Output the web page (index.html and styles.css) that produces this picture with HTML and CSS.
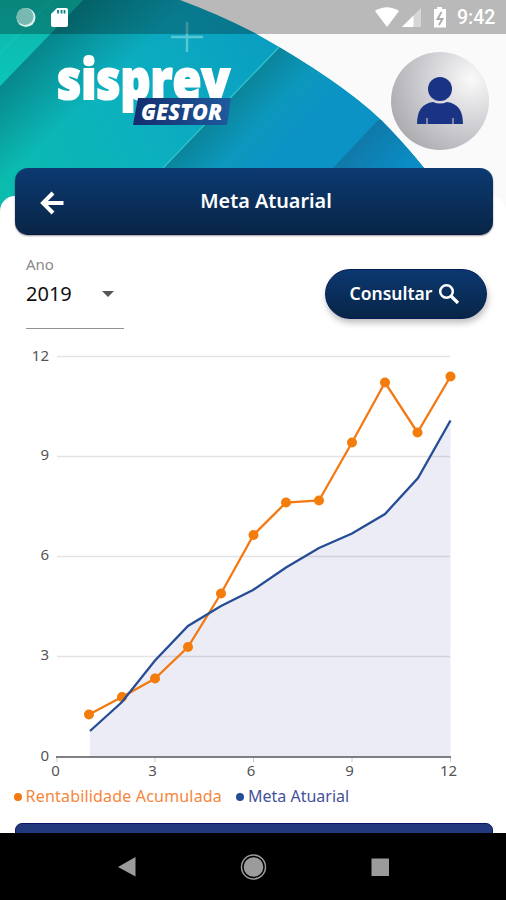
FILE: index.html
```html
<!DOCTYPE html>
<html lang="pt-br">
<head>
	<title>Sisprev Gestor - Meta Atuarial</title>
	<meta charset="utf-8">
	<meta name="viewport" content="width=device-width, initial-scale=1">
	<link rel="stylesheet" href="styles.css">
</head>

<body>
	<header>
		<!-- Background art -->
		<svg class="art" viewBox="0 0 506 240" width="506" height="240">
			<defs>
				<linearGradient id="sea" gradientUnits="userSpaceOnUse" x1="0" y1="190" x2="300" y2="40">
					<stop offset="0" stop-color="#0bbcae"/>
					<stop offset="0.45" stop-color="#0cb0bf"/>
					<stop offset="1" stop-color="#0a9bc2"/>
				</linearGradient>
				<linearGradient id="shadow1" gradientUnits="userSpaceOnUse" x1="40" y1="42" x2="92" y2="97">
					<stop offset="0" stop-color="#067f86" stop-opacity="0.9"/>
					<stop offset="1" stop-color="#067f86" stop-opacity="0"/>
				</linearGradient>
				<linearGradient id="shadow2" gradientUnits="userSpaceOnUse" x1="222" y1="108" x2="275" y2="158">
					<stop offset="0" stop-color="#0b859c"/>
					<stop offset="0.55" stop-color="#0c98bd"/>
					<stop offset="1" stop-color="#0c93c5"/>
				</linearGradient>
				<linearGradient id="shadow3" gradientUnits="userSpaceOnUse" x1="355" y1="143" x2="395" y2="180">
					<stop offset="0" stop-color="#1079a8"/>
					<stop offset="1" stop-color="#0b8cc4"/>
				</linearGradient>
				<linearGradient id="band" x1="0" y1="0" x2="0" y2="1">
					<stop offset="0" stop-color="#0cb5a8"/>
					<stop offset="1" stop-color="#0cc5bb"/>
				</linearGradient>
				<clipPath id="disc">
					<path d="M0 0H180Q218 14 253 32Q340 81 381 120Q403 142 424 168L460 240H0Z"/>
				</clipPath>
			</defs>
			<g clip-path="url(#disc)">
				<rect width="506" height="240" fill="url(#sea)"/>
				<path d="M83 0H230L0 220V86Z" fill="url(#shadow1)"/>
				<path d="M0 0H83L0 86Z" fill="url(#band)"/>
				<path d="M0 54L52 0" stroke="#2fd0c6" stroke-opacity="0.5"/>
				<path d="M279 46L163 168V240H506V46Z" fill="url(#shadow2)"/>
				<path d="M280 46L163 168" stroke="#2cc2cd" stroke-width="1.500"/>
				<path d="M378 120L333 168V240H506V120Z" fill="url(#shadow3)"/>
			</g>
			<path d="M187 22V52M171 37H203" stroke="#7fd8dd" stroke-opacity="0.65" stroke-width="2.500"/>
		</svg>

		<div class="statusbar">
			<svg viewBox="0 0 76 34" width="76" height="34">
				<circle cx="26" cy="17.500" r="9.500" fill="#d9f0ee"/>
				<circle cx="25" cy="16.500" r="8.500" fill="#78b9b1"/>
				<path d="M57 8H66Q68 8 68 10V25Q68 27 66 27H53Q51 27 51 25V14Z" fill="#fff"/>
				<path d="M58 10V13.500M61.500 10V13.500M64.500 10V13.500" stroke="#08808a" stroke-width="1.800"/>
			</svg>
			<div class="right">
				<svg viewBox="372 0 76 34" width="76" height="34">
					<path d="M375 11Q387 3.500 399 11L387 27Z" fill="#fff"/>
					<path d="M421 8V27H402Z" fill="#d6d6d6"/>
					<path d="M413.500 15.500V27H402Z" fill="#fff"/>
					<path d="M437 7H442V9H446V27.500H434V9H437Z" fill="#fff"/>
					<path d="M441.500 12L437.500 19H442.500L439 25" fill="none" stroke="#aaa" stroke-width="1.800"/>
				</svg>
				<span class="clock">9:42</span>
			</div>
		</div>

		<div class="brand">
			<svg class="logo" viewBox="50 50 190 80" width="190" height="80">
				<defs>
					<linearGradient id="tag" x1="0" y1="0" x2="1" y2="0">
						<stop offset="0" stop-color="#152c6d"/>
						<stop offset="1" stop-color="#1e5b9e"/>
					</linearGradient>
				</defs>
				<text x="57" y="98.500" class="word" textLength="173" lengthAdjust="spacingAndGlyphs">sisprev</text>
				<path d="M138 98H231L227 125H133Z" fill="url(#tag)"/>
				<text x="141" y="119.500" class="sub" textLength="81" lengthAdjust="spacingAndGlyphs">GESTOR</text>
			</svg>
			<div class="avatar">
				<svg viewBox="0 0 46 48" width="46" height="48">
					<circle cx="23" cy="12" r="12" fill="#1b3384"/>
					<path d="M0 47Q0 27 16 25Q23 28 30 25Q46 27 46 47Z" fill="#1b3384"/>
					<path d="M10 41V47M36 41V47" stroke="#c0c0c4" stroke-width="1.200"/>
				</svg>
			</div>
		</div>
	</header>

	<main>
		<div class="titlebar">
			<svg viewBox="0 0 24 24" width="24" height="24">
				<path d="M23.500 12H3M13 2L3 12L13 22" fill="none" stroke="#fff" stroke-width="4"/>
			</svg>
			<h1>Meta Atuarial</h1>
		</div>

		<div class="filter">
			<div class="year">
				<label>Ano</label>
				<div class="select"><span>2019</span><i class="caret"></i></div>
			</div>
			<button>
				<span>Consultar</span>
				<svg viewBox="0 0 22 22" width="22" height="22">
					<circle cx="8.500" cy="8.500" r="6.300" fill="none" stroke="#fff" stroke-width="2.500"/>
					<path d="M13 13L20 20" stroke="#fff" stroke-width="3.200"/>
				</svg>
			</button>
		</div>

		<!-- Chart -->
		<svg class="chart" viewBox="0 340 506 440" width="506" height="440">
			<path d="M90 757V731L122 702L155 660.500L188 626L221 606L253 590L286 567.500L319 548L352 533.500L385 514L418 478L450.500 420.500V757Z" fill="#ebecf5"/>
			<path d="M57 356.500H450M57 456.500H450M57 556.500H450M57 656.500H450" stroke="#000" stroke-opacity="0.11" stroke-width="1.400"/>
			<path d="M56 757H451" stroke="#55565c" stroke-width="1.600"/>
			<path d="M57 758V762M155 758V762M253.500 758V762M352 758V762M450.500 758V762" stroke="#ccc"/>
			<g class="line orange">
				<polyline points="89,714.500 122,697 155,678.500 188,647 221,593.500 253.500,535 286,502.500 319,500.500 352,442.500 385,382.500 417.500,432.500 450.500,376.500"/>
				<circle cx="89" cy="714.500" r="5"/>
				<circle cx="122" cy="697" r="5"/>
				<circle cx="155" cy="678.500" r="5"/>
				<circle cx="188" cy="647" r="5"/>
				<circle cx="221" cy="593.500" r="5"/>
				<circle cx="253.500" cy="535" r="5"/>
				<circle cx="286" cy="502.500" r="5"/>
				<circle cx="319" cy="500.500" r="5"/>
				<circle cx="352" cy="442.500" r="5"/>
				<circle cx="385" cy="382.500" r="5"/>
				<circle cx="417.500" cy="432.500" r="5"/>
				<circle cx="450.500" cy="376.500" r="5"/>
			</g>
			<g class="line blue">
				<polyline points="90,731 122,702 155,660.500 188,626 221,606 253,590 286,567.500 319,548 352,533.500 385,514 418,478 450.500,420.500"/>
			</g>
			<g class="axis y">
				<text x="49" y="361">12</text>
				<text x="49" y="460">9</text>
				<text x="49" y="560">6</text>
				<text x="49" y="660">3</text>
				<text x="49" y="761">0</text>
			</g>
			<g class="axis x">
				<text x="55.500" y="776">0</text>
				<text x="152.500" y="776">3</text>
				<text x="251" y="776">6</text>
				<text x="349.500" y="776">9</text>
				<text x="448.500" y="776">12</text>
			</g>
		</svg>

		<div class="legend">
			<span class="item rent"><i></i>Rentabilidade Acumulada</span>
			<span class="item meta"><i></i>Meta Atuarial</span>
		</div>

		<div class="nextcard"></div>
	</main>

	<footer>
		<svg viewBox="0 833 506 67" width="506" height="67" fill="#9b9b9b">
			<path d="M118 867L135.500 857V876.500Z"/>
			<circle cx="253.500" cy="867" r="9.800"/>
			<circle cx="253.500" cy="867" r="12" fill="none" stroke="#9b9b9b" stroke-width="1.500"/>
			<rect x="371.500" y="858.500" width="17.500" height="17.500"/>
		</svg>
	</footer>
</body>
</html>
```
FILE: styles.css
```css
* {
  box-sizing: border-box;
}

body {
  margin: 0;
  width: 506px;
  height: 900px;
  overflow: hidden;
  display: flex;
  flex-direction: column;
  background-color: #fafafa;
  font-family: "Noto Sans", "Open Sans", sans-serif;
}

svg {
  display: block;
}

/* Style the header */
header {
  position: relative;
  height: 168px;
  flex: none;
}

/* Art lies under the status bar, logo and title */
.art {
  position: absolute;
  left: 0;
  top: 0;
}

.statusbar {
  position: relative;
  display: flex;
  justify-content: space-between;
  height: 34px;
  background-color: rgba(0,0,0,0.26);
}
.right {
  display: flex;
  align-items: center;
  padding-right: 11px;
}
.clock {
  width: 47px;
  padding: 2px 0 0 9px;
  color: white;
  font: 500 19.5px/36px Roboto, sans-serif;
}

.brand {
  position: relative;
  display: flex;
  justify-content: space-between;
  padding: 16px 17px 0 50px;
}
.logo {
  overflow: visible;
}
.word {
  font: 800 54px "Open Sans", sans-serif;
  fill: white;
  stroke: white;
  stroke-width: 2px;
}
.sub {
  font: italic 800 22.5px "Open Sans", sans-serif;
  fill: white;
}

.avatar {
  width: 98px;
  height: 98px;
  margin-top: 2px;
  padding: 25px 26px;
  border-radius: 50%;
  background: radial-gradient(circle at 82% 28%, #fafafa 0%, #d5d5d9 38%, #a9a9ad 85%);
}

/* Content */
main {
  position: relative;
  z-index: 1;
  flex: none;
  height: 665px;
  overflow: hidden;
}
main::before {
  content: "";
  position: absolute;
  z-index: -1;
  left: 0;
  right: 0;
  top: 28px;
  bottom: 0;
  border-radius: 15px 15px 0 0;
  background-color: white;
}

.titlebar {
  display: flex;
  align-items: center;
  width: 478px;
  height: 67px;
  margin-left: 15px;
  padding: 3px 25px 0;
  border-radius: 13px;
  border-bottom: 1.5px solid #0a1440;
  background: linear-gradient(#0c3a72, #082546);
  box-shadow: 0 1px 2px rgba(0,0,0,0.4);
  color: white;
}
h1 {
  flex: 1;
  margin: -5px 0 0;
  text-align: center;
  font-size: 19.8px;
  font-weight: 600;
}

.filter {
  display: flex;
  justify-content: space-between;
  height: 105px;
  padding: 19px 19px 0 26px;
}
.year {
  width: 98px;
  height: 75px;
  border-bottom: 1.5px solid #929292;
}
label {
  display: block;
  color: #8a8a8a;
  font-size: 15px;
  line-height: 20px;
}
.select {
  display: flex;
  justify-content: space-between;
  align-items: center;
  padding-right: 10px;
  font-size: 20px;
  line-height: 40px;
  color: #111;
}
.caret {
  border: 6.5px solid transparent;
  border-top-color: #555;
  border-bottom: 0;
}

button {
  display: flex;
  align-items: center;
  justify-content: center;
  gap: 6px;
  width: 162px;
  height: 50px;
  margin-top: 15px;
  padding: 0 2px 2px 0;
  border: 1px solid #081c55;
  border-radius: 25px;
  background: linear-gradient(#0b3871, #082546);
  box-shadow: 1px 4px 6px rgba(0,0,0,0.25);
  color: white;
  font: 600 17.5px "Noto Sans", sans-serif;
}
button svg {
  margin-top: 2px;
}

/* Chart */
.line {
  stroke-width: 2.3px;
}
.line polyline {
  fill: none;
}
.orange {
  stroke: #f37912;
}
.orange circle {
  fill: #f37c0c;
  stroke: none;
}
.blue {
  stroke: #254c95;
}
.axis {
  font-size: 15px;
  fill: #555;
}
.y {
  text-anchor: end;
}
.x {
  text-anchor: middle;
}

.legend {
  display: flex;
  gap: 14px;
  height: 43px;
  padding: 5px 0 0 14px;
  font-size: 16px;
  line-height: 22px;
}
.item {
  display: flex;
  align-items: center;
  gap: 4px;
  height: 22px;
  white-space: nowrap;
}
.item i {
  width: 8px;
  height: 8px;
  margin-top: 1px;
  border-radius: 50%;
}
.rent {
  width: 208px;
  color: #f6863c;
  letter-spacing: 0.18px;
}
.rent i {
  background-color: #f37912;
}
.meta {
  color: #44529b;
}
.meta i {
  background-color: #254c95;
}

.nextcard {
  width: 478px;
  height: 30px;
  margin-left: 15px;
  border: 1.5px solid #0b1468;
  border-radius: 7px;
  background-color: #223a7c;
}

/* Style the footer */
footer {
  flex: none;
  height: 67px;
  background-color: black;
}
```
